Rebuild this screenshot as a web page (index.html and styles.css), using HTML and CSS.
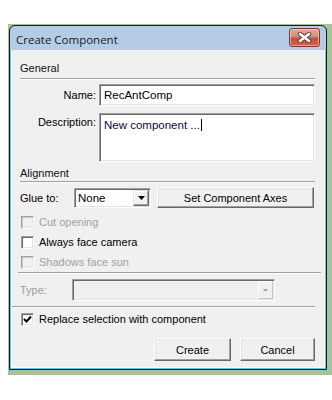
FILE: index.html
```html
<!DOCTYPE html>
<html>
<head>
<meta charset="utf-8">
<link rel="stylesheet" href="styles.css">
</head>
<body>
<div class="stage">
  <div class="window">
    <div class="titlebar">
      <span class="title">Create Component</span>
      <div class="close">
        <svg width="15" height="11" viewBox="0 0 15 11">
          <path d="M3 2 L12 9 M12 2 L3 9" stroke="#5e3a34" stroke-width="4.4" stroke-linecap="round"/>
          <path d="M3 2 L12 9 M12 2 L3 9" stroke="#ffffff" stroke-width="2.6" stroke-linecap="round"/>
        </svg>
      </div>
    </div>
    <div class="frame">
      <div class="frame-inner">
        <div class="content">
          <div class="group-label">General</div>
          <div class="sep"></div>
          <div class="field-row name-row">
            <span class="field-label">Name:</span>
            <div class="textbox">RecAntComp</div>
          </div>
          <div class="field-row desc-row">
            <span class="field-label">Description:</span>
            <div class="textbox textarea">New component ...<span class="caret"></span></div>
          </div>
          <div class="group-label align-label">Alignment</div>
          <div class="sep sep-align"></div>
          <div class="glue-row">
            <span class="glue-label">Glue to:</span>
            <div class="combo glue-combo">
              <span class="combo-text">None</span>
              <span class="combo-btn">
                <svg width="7" height="4" viewBox="0 0 7 4"><path d="M0 0 H7 L3.5 4 Z" fill="#000"/></svg>
              </span>
            </div>
            <div class="btn axes-btn">Set Component Axes</div>
          </div>
          <div class="checks">
            <div class="check-row disabled"><span class="box"></span><span>Cut opening</span></div>
            <div class="check-row"><span class="box"></span><span>Always face camera</span></div>
            <div class="check-row disabled"><span class="box"></span><span>Shadows face sun</span></div>
          </div>
          <div class="sep sep-wide"></div>
          <div class="type-row">
            <span class="type-label">Type:</span>
            <div class="combo type-combo">
              <span class="combo-text"></span>
              <span class="combo-btn flat">
                <svg width="5" height="3" viewBox="0 0 5 3"><path d="M0 0 H5 L2.5 3 Z" fill="#a0a0a0"/></svg>
              </span>
            </div>
          </div>
          <div class="sep sep-type"></div>
          <div class="check-row replace-row">
            <span class="box checked">
              <svg width="9" height="9" viewBox="0 0 9 9"><path d="M1 4 L3.5 6.5 L8 1.5" fill="none" stroke="#000" stroke-width="2"/></svg>
            </span>
            <span>Replace selection with component</span>
          </div>
          <div class="actions">
            <div class="btn action-btn create-btn">Create</div>
            <div class="btn action-btn cancel-btn">Cancel</div>
          </div>
        </div>
      </div>
    </div>
  </div>
</div>
</body>
</html>
```

FILE: styles.css
```css
* { box-sizing: border-box; }
html, body { margin: 0; padding: 0; background: #ffffff; }
body {
  font-family: "Liberation Sans", Arial, sans-serif;
  font-size: 11px;
  color: #000;
}
.stage {
  margin: 24px 0 0 8px;
  width: 324px;
  height: 351px;
  padding: 1px 5px 5px 1px;
  background: #a3c39a;
}
.window {
  width: 318px;
  height: 345px;
  border: 1px solid #1c1c1c;
  border-radius: 6px 6px 0 0;
  background: linear-gradient(#b4cbe5, #d3e2f2);
  display: flex;
  flex-direction: column;
  overflow: hidden;
}
.titlebar {
  height: 24px;
  flex: none;
  display: flex;
  align-items: flex-start;
  justify-content: space-between;
  padding: 0 6px 0 6px;
}
.title {
  font-family: "Open Sans", "Liberation Sans", sans-serif;
  font-size: 11.5px;
  line-height: 16px;
  margin-top: 6px;
  color: #1a1a1a;
}
.close {
  width: 31px;
  height: 19px;
  margin-top: 2px;
  border: 1px solid #7a3b30;
  border-radius: 3px;
  background: linear-gradient(#e2aa9c 0%, #d28a78 45%, #c2523c 55%, #c9644c 100%);
  box-shadow: inset 0 0 0 1px rgba(255,220,210,0.55);
  display: flex;
  align-items: center;
  justify-content: center;
}
.frame {
  flex: 1;
  border: 1px solid #5bc6ef;
  border-top: none;
  display: flex;
}
.frame-inner {
  flex: 1;
  border: 1px solid #ffffff;
  border-top: none;
  display: flex;
}
.content {
  flex: 1;
  background: #f0f0f0;
  padding: 0 9px 0 8px;
  display: flex;
  flex-direction: column;
}
.group-label {
  line-height: 14px;
  margin-top: 11px;
  color: #111;
}
.align-label { margin-top: 4px; }
.sep {
  height: 2px;
  border-top: 1px solid #a0a0a0;
  border-bottom: 1px solid #ffffff;
  margin-top: 3px;
}
.sep-align { margin-top: 1px; }
.sep-wide { margin: 0 -6px 0 -2px; }
.sep-type { margin: 5px 0 0 -8px; }

.field-row {
  display: flex;
  align-items: flex-start;
}
.field-label {
  width: 76px;
  text-align: right;
  margin-right: 3px;
}
.name-row { margin-top: 4px; height: 22px; align-items: center; }
.desc-row { margin-top: 7px; height: 49px; }
.desc-row .field-label { margin-top: 3px; }

.textbox {
  flex: 1;
  height: 100%;
  background: #fff;
  border-top: 1px solid #a0a0a0;
  border-left: 1px solid #a0a0a0;
  border-right: 1px solid #ffffff;
  border-bottom: 1px solid #ffffff;
  box-shadow: inset 1px 1px 0 #696969, inset -1px -1px 0 #e3e3e3;
  padding: 3px 4px;
  line-height: 14px;
  font-size: 11.5px;
}
.textarea {
  padding-top: 4px;
  color: #0b0b40;
}
.caret {
  display: inline-block;
  width: 1px;
  height: 12px;
  background: #000;
  vertical-align: -2px;
  margin-left: 1px;
}

.glue-row {
  margin-top: 4px;
  height: 21px;
  display: flex;
  align-items: center;
}
.glue-label { width: 54px; }
.combo {
  height: 20px;
  display: flex;
  align-items: stretch;
  background: #fff;
  border-top: 1px solid #a0a0a0;
  border-left: 1px solid #a0a0a0;
  border-right: 1px solid #ffffff;
  border-bottom: 1px solid #ffffff;
  box-shadow: inset 1px 1px 0 #696969, inset -1px -1px 0 #e3e3e3;
  padding: 1px 1px 1px 1px;
}
.glue-combo { width: 77px; }
.combo-text {
  flex: 1;
  padding-left: 2px;
  line-height: 17px;
  font-size: 11.5px;
}
.combo-btn {
  width: 16px;
  background: #f0f0f0;
  border-top: 1px solid #e3e3e3;
  border-left: 1px solid #e3e3e3;
  border-right: 1px solid #696969;
  border-bottom: 1px solid #696969;
  box-shadow: inset -1px -1px 0 #a0a0a0, inset 1px 1px 0 #fff;
  display: flex;
  align-items: center;
  justify-content: center;
}
.combo-btn.flat {
  border-color: #fff #c8c8c8 #c8c8c8 #fff;
  box-shadow: none;
}
.btn {
  background: #f0f0f0;
  border-top: 1px solid #ffffff;
  border-left: 1px solid #ffffff;
  border-right: 1px solid #696969;
  border-bottom: 1px solid #696969;
  box-shadow: inset -1px -1px 0 #a0a0a0, inset 1px 1px 0 #e3e3e3;
  display: flex;
  align-items: center;
  justify-content: center;
}
.axes-btn {
  margin-left: 6px;
  width: 157px;
  height: 21px;
}

.checks { margin-top: 4px; }
.check-row {
  height: 20px;
  display: flex;
  align-items: center;
  padding-left: 1px;
}
.check-row.disabled { color: #a0a0a0; }
.box {
  width: 13px;
  height: 13px;
  margin-right: 5px;
  background: #fff;
  border-top: 1px solid #a0a0a0;
  border-left: 1px solid #a0a0a0;
  border-right: 1px solid #ffffff;
  border-bottom: 1px solid #ffffff;
  box-shadow: inset 1px 1px 0 #696969, inset -1px -1px 0 #e3e3e3;
  display: flex;
  align-items: center;
  justify-content: center;
}
.disabled .box {
  background: #f0f0f0;
  box-shadow: inset 1px 1px 0 #c8c8c8, inset -1px -1px 0 #e3e3e3;
}

.type-row {
  margin-top: 5px;
  height: 22px;
  display: flex;
  align-items: center;
}
.type-label { width: 52px; color: #a0a0a0; }
.type-combo {
  width: 203px;
  height: 22px;
  background: #f0f0f0;
}
.type-combo .combo-btn { width: 15px; }

.replace-row { margin-top: 1px; }

.actions {
  margin-top: 9px;
  display: flex;
  justify-content: flex-end;
  gap: 9px;
}
.action-btn {
  height: 23px;
}
.create-btn { width: 77px; }
.cancel-btn { width: 75px; }
```
